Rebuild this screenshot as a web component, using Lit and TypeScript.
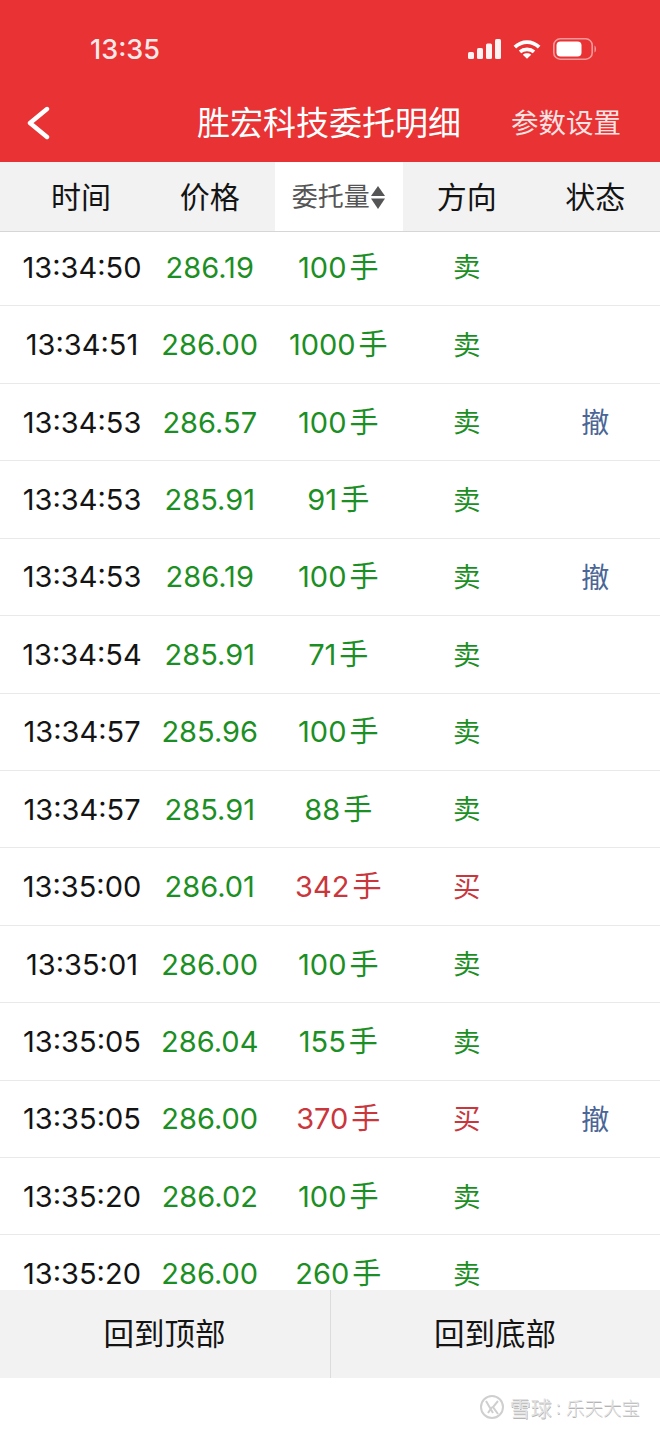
import { LitElement, html, css } from "lit";
import { customElement } from "lit/decorators.js";

type Row = [string, string, string, string, boolean];
const rows: Row[] = [
  ["13:34:50", "286.19", "100", "卖", false],
  ["13:34:51", "286.00", "1000", "卖", false],
  ["13:34:53", "286.57", "100", "卖", true],
  ["13:34:53", "285.91", "91", "卖", false],
  ["13:34:53", "286.19", "100", "卖", true],
  ["13:34:54", "285.91", "71", "卖", false],
  ["13:34:57", "285.96", "100", "卖", false],
  ["13:34:57", "285.91", "88", "卖", false],
  ["13:35:00", "286.01", "342", "买", false],
  ["13:35:01", "286.00", "100", "卖", false],
  ["13:35:05", "286.04", "155", "卖", false],
  ["13:35:05", "286.00", "370", "买", true],
  ["13:35:20", "286.02", "100", "卖", false],
  ["13:35:20", "286.00", "260", "卖", false],
];

@customElement("app-root")
export class AppRoot extends LitElement {
  static styles = css`
    :host {
      display: flex;
      flex-direction: column;
      width: 660px;
      height: 1429px;
      background: #fff;
      overflow: hidden;
      font-family: Inter, "Noto Sans CJK SC", sans-serif;
      color: #141414;
    }
    .top {
      background: #e83234;
      color: #fff;
      flex: none;
      height: 162px;
      display: flex;
      flex-direction: column;
    }
    .status {
      height: 98px;
      flex: none;
      display: flex;
      align-items: center;
      padding: 0 63px 0 90px;
      justify-content: space-between;
    }
    .clock {
      font-size: 27px;
      font-weight: 500;
      color: #fbe9e9;
    }
    .status-icons {
      display: flex;
      align-items: center;
      gap: 12px;
    }
    .nav {
      flex: 1;
      display: grid;
      grid-template-columns: 197px auto 1fr;
      align-items: center;
      padding-bottom: 14px;
    }
    .back {
      padding-left: 26px;
      display: flex;
    }
    .title {
      font-size: 33px;
      line-height: 40px;
      white-space: nowrap;
    }
    .settings {
      font-size: 27.5px;
      line-height: 40px;
      justify-self: end;
      margin-right: 39px;
      color: #fbe3e3;
      white-space: nowrap;
      font-weight: 400;
    }
    .grid {
      display: grid;
      grid-template-columns: 129px repeat(4, 128.5px);
      padding-left: 17px;
    }
    .head {
      flex: none;
      height: 70px;
      background: #f2f2f2;
      border-bottom: 1.5px solid #d6d6d6;
      box-sizing: border-box;
      font-size: 30px;
    }
    .head > div {
      display: flex;
      align-items: center;
      justify-content: center;
      padding-right: 1px;
      white-space: nowrap;
      line-height: 40px;
    }
    .head .active {
      background: #fff;
      font-size: 26px;
      color: #555;
      gap: 1px;
    }
    .list {
      flex: none;
      height: 1058px;
      overflow: hidden;
    }
    .rows {
      margin-top: -3px;
    }
    .row {
      height: 77.43px;
      box-sizing: border-box;
      border-bottom: 1.5px solid #e9e9e9;
      align-items: center;
      font-size: 29px;
      line-height: 1;
      white-space: nowrap;
    }
    .row > div {
      display: flex;
      justify-content: center;
      align-items: center;
      padding-right: 1px;
    }
    .row > .time {
      padding: 0 0 0 1px;
    }
    .green {
      color: #1c8f24;
    }
    .red {
      color: #c9363c;
    }
    .hand {
      font-size: 29px;
      margin-left: 3px;
    }
    .row > .dir {
      font-size: 27.5px;
      padding-top: 2px;
    }
    .row > .cancel {
      font-size: 28px;
      color: #4a6596;
      padding-top: 2px;
    }
    .foot {
      flex: none;
      height: 88px;
      background: #f2f2f2;
      display: grid;
      grid-template-columns: 330px 1fr;
      font-size: 30.5px;
    }
    .foot > div {
      display: flex;
      align-items: center;
      justify-content: center;
      padding: 0 1px 4px 0;
    }
    .foot > div + div {
      border-left: 1px solid #dcdcdc;
    }
    .mark {
      flex: 1;
      display: flex;
      align-items: center;
      justify-content: flex-end;
      padding: 6px 20px 0 0;
      color: #e2e2e2;
      font-size: 18.5px;
      text-shadow: 0.6px 0.6px 0.6px #b4b4b4;
      white-space: nowrap;
      font-weight: 300;
    }
    .mark svg {
      margin-right: 5px;
    }
    .mark .brand {
      font-size: 21px;
      font-weight: 400;
    }
    .mark .colon {
      margin: 0 5px 0 4px;
    }
  `;

  private signal() {
    return html`<svg width="33" height="20" viewBox="0 0 33 20" fill="#fdf3f3">
      <rect x="0" y="13" width="6" height="7" rx="1.5"></rect>
      <rect x="9" y="9" width="6" height="11" rx="1.5"></rect>
      <rect x="18" y="4.5" width="6" height="15.5" rx="1.5"></rect>
      <rect x="27" y="0" width="6" height="20" rx="1.5"></rect>
    </svg>`;
  }

  private wifi() {
    return html`<svg width="28" height="21" viewBox="0 0 30 21" fill="none" stroke="#fff" stroke-width="4">
      <path d="M2 8 C9.5 0.8 20.5 0.8 28 8"></path>
      <path d="M7.5 13 C11.5 9.6 18.5 9.6 22.5 13"></path>
      <path d="M10.5 16 L15 20.5 L19.5 16 C17 14 13 14 10.5 16 Z" fill="#fff" stroke="none"></path>
    </svg>`;
  }

  private battery() {
    return html`<svg width="44" height="22" viewBox="0 0 44 22">
      <rect x="0.8" y="0.8" width="38.4" height="20.4" rx="6.5" fill="none" stroke="#f59a9b" stroke-width="1.6"></rect>
      <rect x="3.5" y="3.5" width="25" height="15" rx="4" fill="#fff"></rect>
      <path d="M41.5 7.5 C43.5 8.5 43.5 13.5 41.5 14.5 Z" fill="#f59a9b"></path>
    </svg>`;
  }

  private renderRow(r: Row) {
    const color = r[3] === "买" ? "red" : "green";
    return html`<div class="grid row">
      <div class="time">${r[0]}</div>
      <div class="green">${r[1]}</div>
      <div class=${color}>${r[2]}<span class="hand">手</span></div>
      <div class="dir ${color}">${r[3]}</div>
      <div class="cancel">${r[4] ? "撤" : ""}</div>
    </div>`;
  }

  render() {
    return html`
      <div class="top">
        <div class="status">
          <span class="clock">13:35</span>
          <div class="status-icons">${this.signal()}${this.wifi()}${this.battery()}</div>
        </div>
        <div class="nav">
          <div class="back">
            <svg width="26" height="34" viewBox="0 0 26 34" fill="none" stroke="#fff" stroke-width="4.4" stroke-linecap="round" stroke-linejoin="round">
              <path d="M21 3 L4 17 L21 31"></path>
            </svg>
          </div>
          <div class="title">胜宏科技委托明细</div>
          <div class="settings">参数设置</div>
        </div>
      </div>
      <div class="grid head">
        <div>时间</div>
        <div>价格</div>
        <div class="active">
          委托量
          <svg width="14" height="24" viewBox="0 0 14 24" fill="#555">
            <path d="M7 1 L14 11 H0 Z"></path>
            <path d="M7 24 L14 13.5 H0 Z"></path>
          </svg>
        </div>
        <div>方向</div>
        <div>状态</div>
      </div>
      <div class="list"><div class="rows">${rows.map((r) => this.renderRow(r))}</div></div>
      <div class="foot">
        <div>回到顶部</div>
        <div>回到底部</div>
      </div>
      <div class="mark">
        <svg width="26" height="26" viewBox="0 0 26 26" fill="none" stroke="#cfcfcf" stroke-width="2">
          <circle cx="13" cy="13" r="11"></circle>
          <path d="M7 7 L14 19 M9 19 L13 13 M19 7 L14 13 L19 20"></path>
        </svg>
        <span class="brand">雪球</span><span class="colon">:</span><span>乐天大宝</span>
      </div>
    `;
  }
}
